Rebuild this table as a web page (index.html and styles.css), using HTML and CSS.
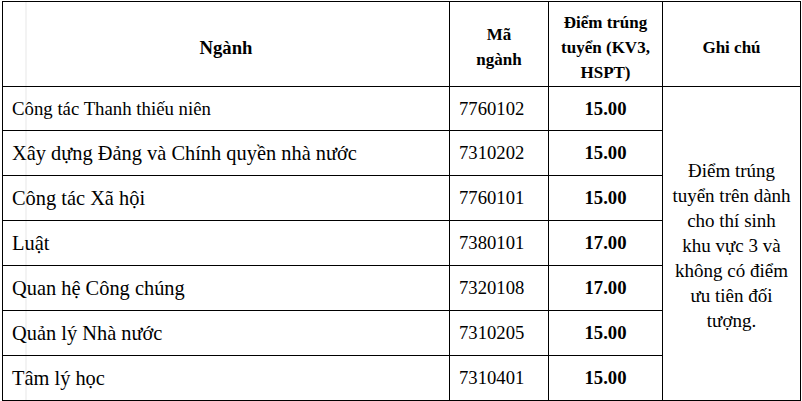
FILE: index.html
```html
<!DOCTYPE html>
<html lang="vi">
<head>
<meta charset="utf-8">
<title>Điểm trúng tuyển</title>
<link rel="stylesheet" href="styles.css">
</head>
<body>
<table class="scores">
  <colgroup>
    <col class="c-name">
    <col class="c-code">
    <col class="c-score">
    <col class="c-note">
  </colgroup>
  <thead>
    <tr>
      <th class="h-name">Ngành</th>
      <th>Mã<br>ngành</th>
      <th>Điểm trúng tuyển (KV3, HSPT)</th>
      <th>Ghi chú</th>
    </tr>
  </thead>
  <tbody>
    <tr class="first">
      <td class="name name-sm">Công tác Thanh thiếu niên</td>
      <td class="code">7760102</td>
      <td class="score">15.00</td>
      <td class="note" rowspan="7">Điểm trúng tuyển trên dành cho thí sinh khu vực 3 và không có điểm ưu tiên đối tượng.</td>
    </tr>
    <tr>
      <td class="name">Xây dựng Đảng và Chính quyền nhà nước</td>
      <td class="code">7310202</td>
      <td class="score">15.00</td>
    </tr>
    <tr>
      <td class="name">Công tác Xã hội</td>
      <td class="code">7760101</td>
      <td class="score">15.00</td>
    </tr>
    <tr>
      <td class="name">Luật</td>
      <td class="code">7380101</td>
      <td class="score">17.00</td>
    </tr>
    <tr>
      <td class="name">Quan hệ Công chúng</td>
      <td class="code">7320108</td>
      <td class="score">17.00</td>
    </tr>
    <tr>
      <td class="name">Quản lý Nhà nước</td>
      <td class="code">7310205</td>
      <td class="score">15.00</td>
    </tr>
    <tr>
      <td class="name">Tâm lý học</td>
      <td class="code">7310401</td>
      <td class="score">15.00</td>
    </tr>
  </tbody>
</table>
</body>
</html>
```
FILE: styles.css
```css
html, body {
  margin: 0;
  padding: 0;
  background: #ffffff;
}

body {
  padding: 1px 0 0 2px;
  color: #000000;
}

.scores {
  font-family: "Liberation Serif", "DejaVu Serif", serif;
  border-collapse: collapse;
  table-layout: fixed;
  width: 798px;
  background-image: linear-gradient(to right, transparent 23px, #e6e6e6 23px, #e6e6e6 24px, transparent 24px);
}

.c-name { width: 447px; }
.c-code { width: 99px; }
.c-score { width: 114px; }
.c-note { width: 138px; }

.scores th,
.scores td {
  border: 1px solid #000000;
  padding: 0;
  font-family: "Liberation Serif", "DejaVu Serif", serif;
}

.scores th {
  height: 78px;
  font-size: 17px;
  font-weight: bold;
  line-height: 25px;
  text-align: center;
  vertical-align: middle;
  padding: 6px 6px 0;
}

.scores th.h-name {
  font-size: 18.67px;
}

.scores td {
  height: 44px;
  font-size: 18.67px;
  line-height: 22px;
  vertical-align: middle;
}

.scores tr.first td {
  height: 43px;
}

.scores td.name {
  padding-left: 9px;
  font-size: 20.4px;
}

.scores td.name-sm {
  font-size: 18.8px;
}

.scores td.code {
  padding-left: 9px;
}

.scores td.score {
  text-align: center;
  font-weight: bold;
}

.scores td.note {
  text-align: center;
  font-size: 19px;
  line-height: 25px;
  padding: 4px 8px 0;
}
```
